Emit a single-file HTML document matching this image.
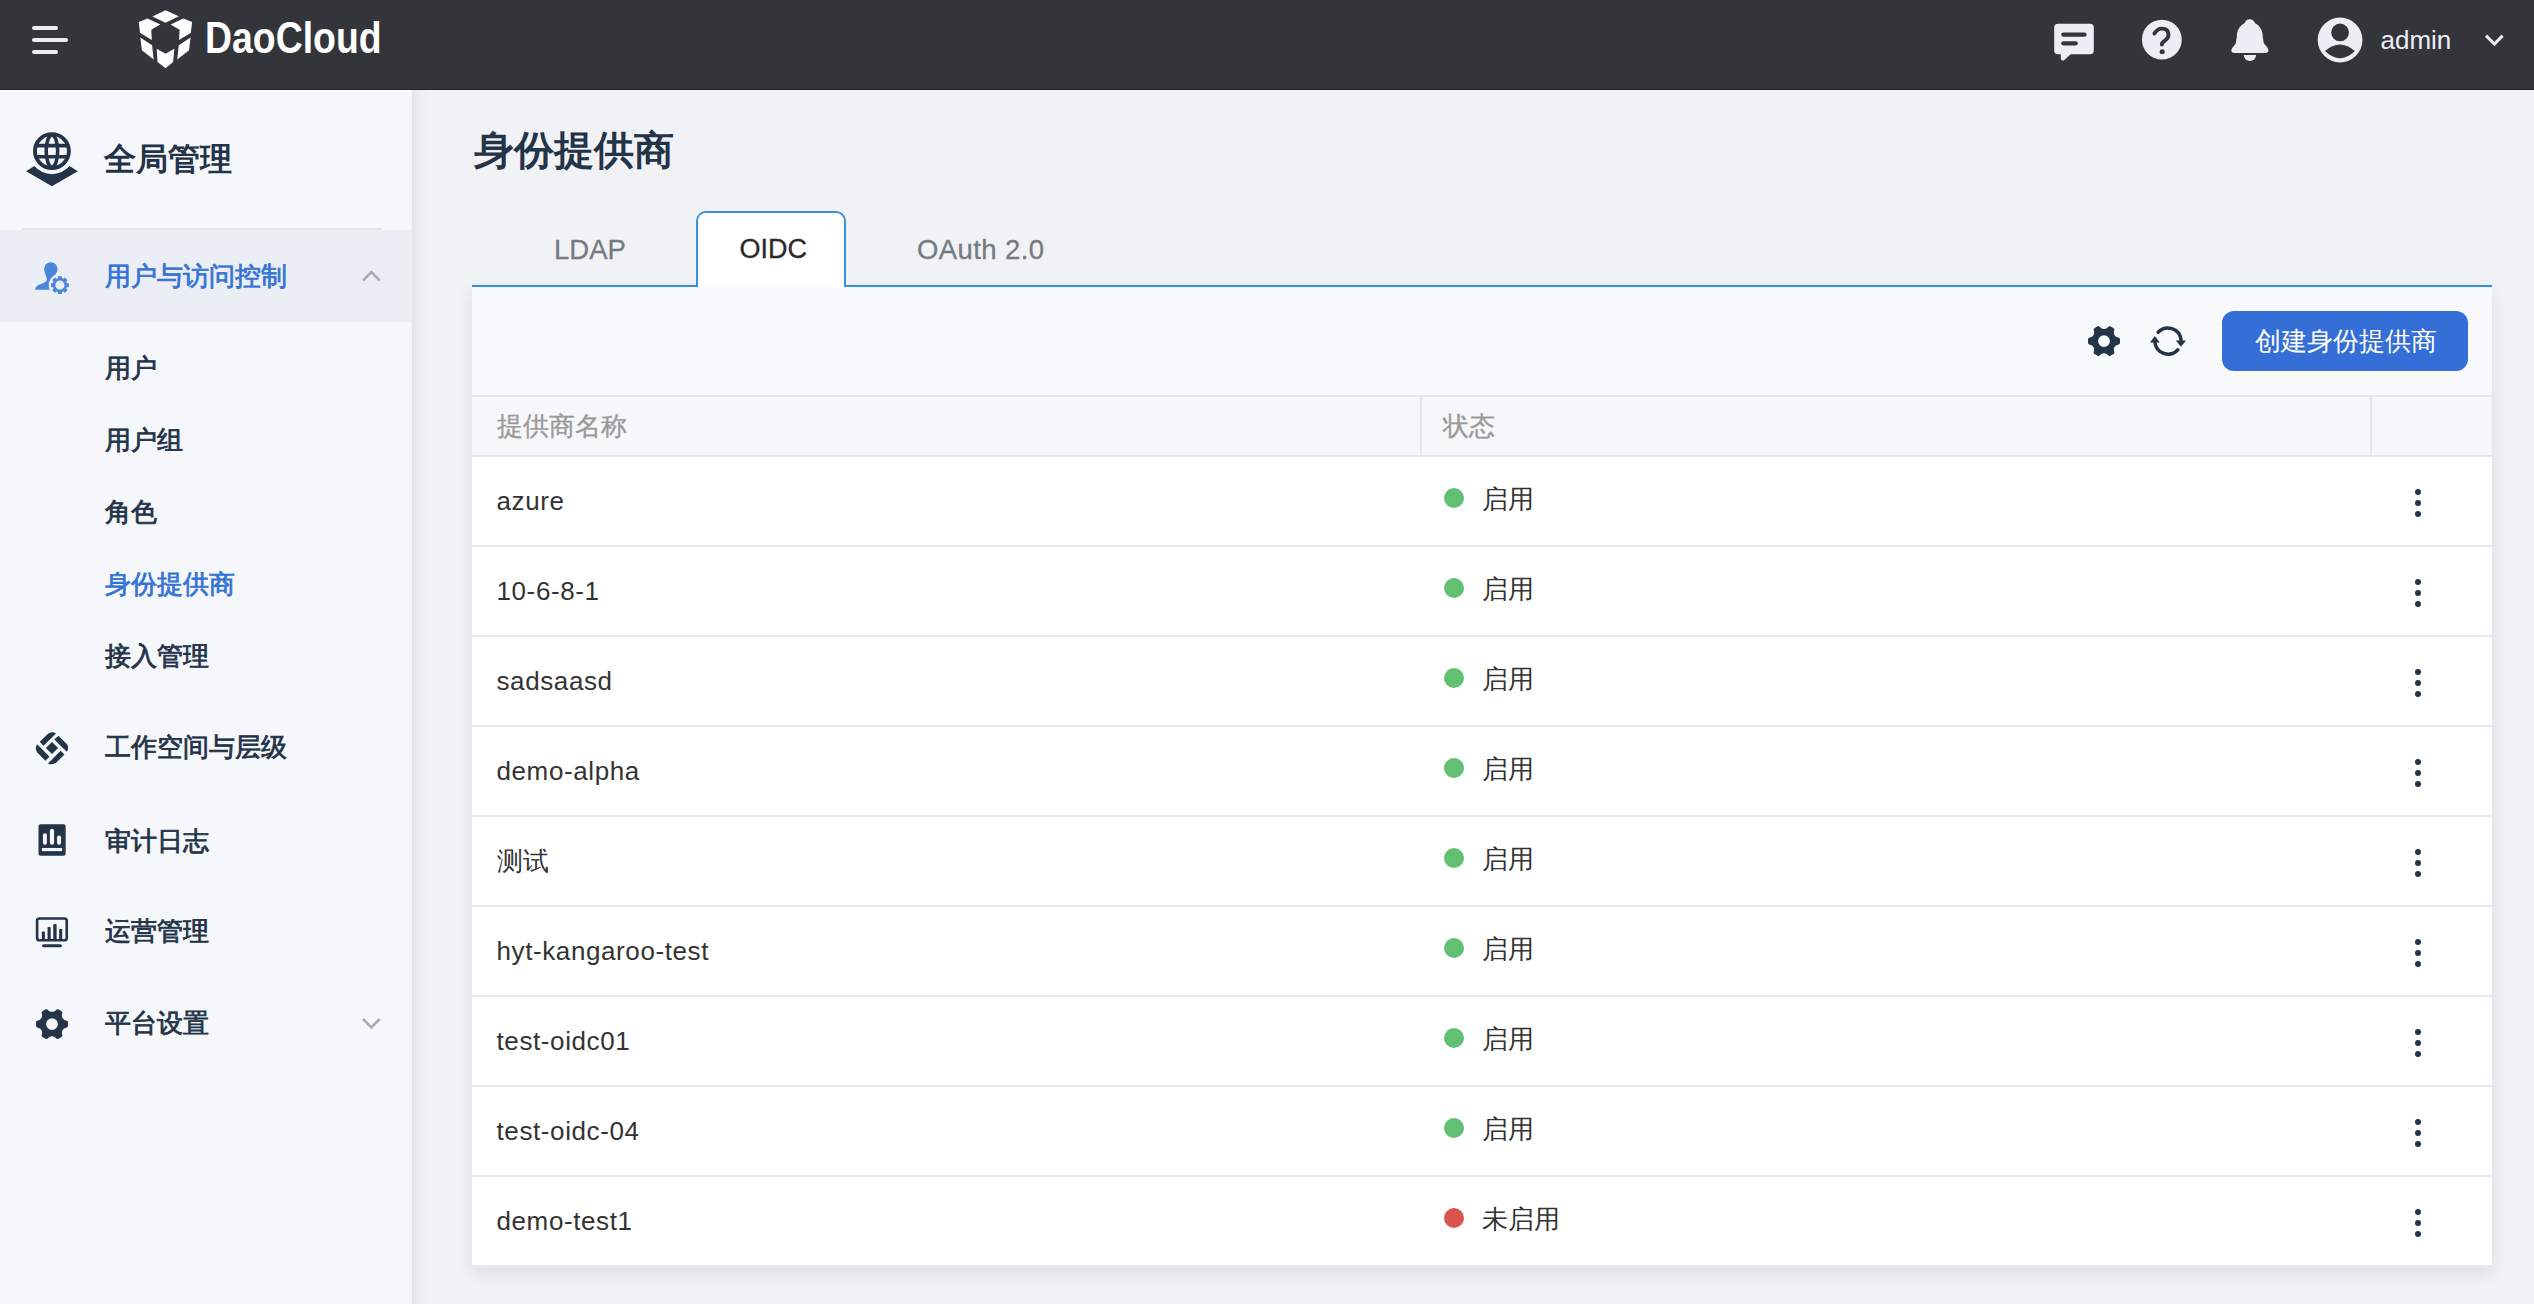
<!DOCTYPE html>
<html><head><meta charset="utf-8">
<style>
*{box-sizing:border-box;margin:0;padding:0}
html,body{width:2534px;height:1304px;overflow:hidden;background:#f1f2f6;font-family:"Liberation Sans",sans-serif}
.a{position:absolute}
.t{position:absolute;white-space:nowrap;line-height:1}
svg{position:absolute;overflow:visible}
</style></head><body>
<div class="a" style="left:0;top:0;width:2534px;height:90px;background:#34353b"></div>
<div class="a" style="left:0;top:89px;width:2534px;height:1px;background:#26272c"></div>
<div class="a" style="left:32px;top:26px;width:26px;height:4px;border-radius:2px;background:#eceef5"></div>
<div class="a" style="left:32px;top:38px;width:36px;height:4px;border-radius:2px;background:#eceef5"></div>
<div class="a" style="left:32px;top:50px;width:26px;height:4px;border-radius:2px;background:#eceef5"></div>
<svg style="left:130px;top:0" width="260" height="80" viewBox="0 0 2534 780"><g fill="#fff">
<path d="M346,100 L475,158 L346,222 L218,160 Z"/>
<path d="M85,215 L170,180 L295,240 L207,290 L212,390 L97,320 Z"/>
<path d="M605,215 L520,180 L395,240 L483,290 L478,390 L593,320 Z"/>
<path d="M100,365 L215,440 L230,580 L115,490 Z"/>
<path d="M590,365 L475,440 L460,580 L575,490 Z"/>
<path d="M260,475 L346,525 L432,475 L420,605 L346,665 L268,605 Z"/>
</g></svg>
<div class="t" style="left:205px;top:16px;font-size:44px;color:#fff;font-weight:700;transform:scaleX(0.85);transform-origin:0 0;">DaoCloud</div>
<svg style="left:2040px;top:10px" width="160" height="60" viewBox="0 0 2534 950">
<g fill="#eceef5"><rect x="225" y="218" width="627" height="482" rx="60"/>
<path d="M330,680 L330,770 Q335,815 385,790 L500,690 Z"/></g>
<g stroke="#34353b" stroke-width="68" stroke-linecap="round" fill="none"><path d="M370,390 H705"/><path d="M370,528 H565"/></g>
<circle cx="1930" cy="470" r="315" fill="#eceef5"/>
<path d="M1812,372 Q1860,295 1930,295 Q2035,295 2035,395 Q2035,440 1983,480 Q1930,515 1930,545" stroke="#34353b" stroke-width="62" stroke-linecap="round" fill="none"/>
<circle cx="1935" cy="660" r="40" fill="#34353b"/>
</svg>
<svg style="left:2210px;top:10px" width="160" height="60" viewBox="0 0 2534 950"><g fill="#eceef5">
<path d="M630,145 C670,145 700,170 715,210 C790,250 835,320 835,420 L850,520 C870,560 930,600 925,640 C925,665 905,680 880,680 L385,680 C355,680 335,665 338,635 C340,600 400,560 410,520 L425,420 C425,320 470,250 545,210 C560,170 590,145 630,145 Z"/>
<path d="M535,712 H730 A97,97 0 0 1 535,712 Z"/>
<circle cx="2060" cy="475" r="355"/></g>
<g fill="#34353b"><circle cx="2060" cy="355" r="140"/><path d="M1820,650 Q2060,440 2295,650 Q2060,880 1820,650 Z"/></g>
</svg>
<div class="t" style="left:2380.5px;top:27px;font-size:26px;color:#eceef5;font-weight:400;">admin</div>
<svg style="left:2480px;top:28px" width="30" height="22" viewBox="0 0 30 22"><path d="M6,7.6 L14.4,16 L22.6,7.6" stroke="#eceef5" stroke-width="3" fill="none"/></svg>
<div class="a" style="left:0;top:90px;width:412px;height:1214px;background:#f6f7fb"></div>
<div class="a" style="left:0;top:90px;width:412px;height:1px;background:#fbfcfe"></div>
<div class="a" style="left:412px;top:90px;width:18px;height:1214px;background:linear-gradient(to right,rgba(40,45,60,0.07),rgba(40,45,60,0.02) 50%,rgba(40,45,60,0))"></div>
<svg style="left:20px;top:120px" width="70" height="75" viewBox="0 0 1217 1304"><g stroke="#233348" fill="none">
<circle cx="555" cy="540" r="295" stroke-width="68"/>
<ellipse cx="555" cy="540" rx="100" ry="280" stroke-width="62"/>
<path d="M270,445 H840 M270,640 H840" stroke-width="62"/></g>
<path fill="#233348" d="M105,890 L250,800 A400,400 0 0 0 860,800 L1005,890 L555,1150 Z"/>
</svg>
<div class="t" style="left:104px;top:143.5px;font-size:31.5px;color:#233348;font-weight:700;">全局管理</div>
<div class="a" style="left:22px;top:228px;width:360px;height:2px;background:#e3e5eb"></div>
<div class="a" style="left:0;top:230px;width:412px;height:92px;background:#eceef6"></div>
<svg style="left:25px;top:250px" width="60" height="55" viewBox="0 0 1423 1304">
<g fill="#4a86da"><circle cx="612" cy="448" r="160"/><path d="M470,540 C490,610 520,650 520,700 C520,745 480,770 420,790 C300,830 240,880 240,945 L600,945 C560,860 570,760 640,680 L740,560 Z"/></g>
<circle cx="828" cy="833" r="265" fill="#eceef6"/>
<path fill="#4a86da" fill-rule="evenodd" d="M1041.00,833.00 L1040.99,834.86 L1040.97,836.72 L1040.93,838.58 L1040.87,840.43 L1040.80,842.29 L1040.71,844.15 L1040.60,846.00 L1040.48,847.86 L1040.34,849.71 L1040.19,851.56 L1040.02,853.42 L1039.83,855.26 L1039.63,857.11 L1039.41,858.96 L1039.18,860.80 L1038.93,862.64 L1038.66,864.48 L1038.38,866.32 L1038.08,868.16 L1037.76,869.99 L1037.43,871.82 L1037.09,873.64 L1036.72,875.47 L1036.35,877.29 L1035.95,879.10 L1033.95,880.55 L1028.99,881.25 L1021.79,881.32 L1013.40,880.95 L1005.03,880.43 L997.89,880.11 L992.99,880.31 L991.00,881.28 L990.57,882.70 L990.13,884.12 L989.68,885.53 L989.22,886.94 L988.74,888.35 L988.25,889.75 L987.75,891.14 L987.23,892.54 L986.71,893.92 L986.17,895.31 L985.62,896.68 L985.06,898.06 L984.49,899.42 L983.90,900.79 L983.30,902.15 L982.69,903.50 L982.07,904.85 L981.44,906.19 L980.79,907.52 L980.14,908.85 L979.47,910.18 L978.79,911.50 L978.10,912.81 L977.40,914.12 L978.12,916.21 L981.44,919.81 L986.72,924.64 L993.00,930.19 L999.20,935.87 L1004.24,941.00 L1007.25,945.01 L1007.64,947.44 L1006.64,949.01 L1005.62,950.56 L1004.59,952.11 L1003.54,953.64 L1002.48,955.17 L1001.41,956.69 L1000.32,958.20 L999.22,959.70 L998.11,961.19 L996.98,962.67 L995.85,964.14 L994.70,965.60 L993.53,967.05 L992.36,968.48 L991.17,969.91 L989.97,971.33 L988.75,972.74 L987.53,974.14 L986.29,975.52 L985.04,976.90 L983.78,978.27 L982.50,979.62 L981.22,980.96 L979.92,982.29 L978.61,983.61 L977.29,984.92 L975.96,986.22 L974.62,987.50 L973.27,988.78 L971.90,990.04 L970.52,991.29 L969.14,992.53 L967.74,993.75 L966.33,994.97 L964.91,996.17 L963.48,997.36 L962.05,998.53 L960.60,999.70 L959.14,1000.85 L957.67,1001.98 L956.19,1003.11 L954.70,1004.22 L953.20,1005.32 L951.69,1006.41 L950.17,1007.48 L948.64,1008.54 L947.11,1009.59 L945.56,1010.62 L944.01,1011.64 L942.44,1012.64 L940.01,1012.25 L936.00,1009.24 L930.87,1004.20 L925.19,998.00 L919.64,991.72 L914.81,986.44 L911.21,983.12 L909.12,982.40 L907.81,983.10 L906.50,983.79 L905.18,984.47 L903.85,985.14 L902.52,985.79 L901.19,986.44 L899.85,987.07 L898.50,987.69 L897.15,988.30 L895.79,988.90 L894.42,989.49 L893.06,990.06 L891.68,990.62 L890.31,991.17 L888.92,991.71 L887.54,992.23 L886.14,992.75 L884.75,993.25 L883.35,993.74 L881.94,994.22 L880.53,994.68 L879.12,995.13 L877.70,995.57 L876.28,996.00 L875.31,997.99 L875.11,1002.89 L875.43,1010.03 L875.95,1018.40 L876.32,1026.79 L876.25,1033.99 L875.55,1038.95 L874.10,1040.95 L872.29,1041.35 L870.47,1041.72 L868.64,1042.09 L866.82,1042.43 L864.99,1042.76 L863.16,1043.08 L861.32,1043.38 L859.48,1043.66 L857.64,1043.93 L855.80,1044.18 L853.96,1044.41 L852.11,1044.63 L850.26,1044.83 L848.42,1045.02 L846.56,1045.19 L844.71,1045.34 L842.86,1045.48 L841.00,1045.60 L839.15,1045.71 L837.29,1045.80 L835.43,1045.87 L833.58,1045.93 L831.72,1045.97 L829.86,1045.99 L828.00,1046.00 L826.14,1045.99 L824.28,1045.97 L822.42,1045.93 L820.57,1045.87 L818.71,1045.80 L816.85,1045.71 L815.00,1045.60 L813.14,1045.48 L811.29,1045.34 L809.44,1045.19 L807.58,1045.02 L805.74,1044.83 L803.89,1044.63 L802.04,1044.41 L800.20,1044.18 L798.36,1043.93 L796.52,1043.66 L794.68,1043.38 L792.84,1043.08 L791.01,1042.76 L789.18,1042.43 L787.36,1042.09 L785.53,1041.72 L783.71,1041.35 L781.90,1040.95 L780.45,1038.95 L779.75,1033.99 L779.68,1026.79 L780.05,1018.40 L780.57,1010.03 L780.89,1002.89 L780.69,997.99 L779.72,996.00 L778.30,995.57 L776.88,995.13 L775.47,994.68 L774.06,994.22 L772.65,993.74 L771.25,993.25 L769.86,992.75 L768.46,992.23 L767.08,991.71 L765.69,991.17 L764.32,990.62 L762.94,990.06 L761.58,989.49 L760.21,988.90 L758.85,988.30 L757.50,987.69 L756.15,987.07 L754.81,986.44 L753.48,985.79 L752.15,985.14 L750.82,984.47 L749.50,983.79 L748.19,983.10 L746.88,982.40 L744.79,983.12 L741.19,986.44 L736.36,991.72 L730.81,998.00 L725.13,1004.20 L720.00,1009.24 L715.99,1012.25 L713.56,1012.64 L711.99,1011.64 L710.44,1010.62 L708.89,1009.59 L707.36,1008.54 L705.83,1007.48 L704.31,1006.41 L702.80,1005.32 L701.30,1004.22 L699.81,1003.11 L698.33,1001.98 L696.86,1000.85 L695.40,999.70 L693.95,998.53 L692.52,997.36 L691.09,996.17 L689.67,994.97 L688.26,993.75 L686.86,992.53 L685.48,991.29 L684.10,990.04 L682.73,988.78 L681.38,987.50 L680.04,986.22 L678.71,984.92 L677.39,983.61 L676.08,982.29 L674.78,980.96 L673.50,979.62 L672.22,978.27 L670.96,976.90 L669.71,975.52 L668.47,974.14 L667.25,972.74 L666.03,971.33 L664.83,969.91 L663.64,968.48 L662.47,967.05 L661.30,965.60 L660.15,964.14 L659.02,962.67 L657.89,961.19 L656.78,959.70 L655.68,958.20 L654.59,956.69 L653.52,955.17 L652.46,953.64 L651.41,952.11 L650.38,950.56 L649.36,949.01 L648.36,947.44 L648.75,945.01 L651.76,941.00 L656.80,935.87 L663.00,930.19 L669.28,924.64 L674.56,919.81 L677.88,916.21 L678.60,914.12 L677.90,912.81 L677.21,911.50 L676.53,910.18 L675.86,908.85 L675.21,907.52 L674.56,906.19 L673.93,904.85 L673.31,903.50 L672.70,902.15 L672.10,900.79 L671.51,899.42 L670.94,898.06 L670.38,896.68 L669.83,895.31 L669.29,893.92 L668.77,892.54 L668.25,891.14 L667.75,889.75 L667.26,888.35 L666.78,886.94 L666.32,885.53 L665.87,884.12 L665.43,882.70 L665.00,881.28 L663.01,880.31 L658.11,880.11 L650.97,880.43 L642.60,880.95 L634.21,881.32 L627.01,881.25 L622.05,880.55 L620.05,879.10 L619.65,877.29 L619.28,875.47 L618.91,873.64 L618.57,871.82 L618.24,869.99 L617.92,868.16 L617.62,866.32 L617.34,864.48 L617.07,862.64 L616.82,860.80 L616.59,858.96 L616.37,857.11 L616.17,855.26 L615.98,853.42 L615.81,851.56 L615.66,849.71 L615.52,847.86 L615.40,846.00 L615.29,844.15 L615.20,842.29 L615.13,840.43 L615.07,838.58 L615.03,836.72 L615.01,834.86 L615.00,833.00 L615.01,831.14 L615.03,829.28 L615.07,827.42 L615.13,825.57 L615.20,823.71 L615.29,821.85 L615.40,820.00 L615.52,818.14 L615.66,816.29 L615.81,814.44 L615.98,812.58 L616.17,810.74 L616.37,808.89 L616.59,807.04 L616.82,805.20 L617.07,803.36 L617.34,801.52 L617.62,799.68 L617.92,797.84 L618.24,796.01 L618.57,794.18 L618.91,792.36 L619.28,790.53 L619.65,788.71 L620.05,786.90 L622.05,785.45 L627.01,784.75 L634.21,784.68 L642.60,785.05 L650.97,785.57 L658.11,785.89 L663.01,785.69 L665.00,784.72 L665.43,783.30 L665.87,781.88 L666.32,780.47 L666.78,779.06 L667.26,777.65 L667.75,776.25 L668.25,774.86 L668.77,773.46 L669.29,772.08 L669.83,770.69 L670.38,769.32 L670.94,767.94 L671.51,766.58 L672.10,765.21 L672.70,763.85 L673.31,762.50 L673.93,761.15 L674.56,759.81 L675.21,758.48 L675.86,757.15 L676.53,755.82 L677.21,754.50 L677.90,753.19 L678.60,751.88 L677.88,749.79 L674.56,746.19 L669.28,741.36 L663.00,735.81 L656.80,730.13 L651.76,725.00 L648.75,720.99 L648.36,718.56 L649.36,716.99 L650.38,715.44 L651.41,713.89 L652.46,712.36 L653.52,710.83 L654.59,709.31 L655.68,707.80 L656.78,706.30 L657.89,704.81 L659.02,703.33 L660.15,701.86 L661.30,700.40 L662.47,698.95 L663.64,697.52 L664.83,696.09 L666.03,694.67 L667.25,693.26 L668.47,691.86 L669.71,690.48 L670.96,689.10 L672.22,687.73 L673.50,686.38 L674.78,685.04 L676.08,683.71 L677.39,682.39 L678.71,681.08 L680.04,679.78 L681.38,678.50 L682.73,677.22 L684.10,675.96 L685.48,674.71 L686.86,673.47 L688.26,672.25 L689.67,671.03 L691.09,669.83 L692.52,668.64 L693.95,667.47 L695.40,666.30 L696.86,665.15 L698.33,664.02 L699.81,662.89 L701.30,661.78 L702.80,660.68 L704.31,659.59 L705.83,658.52 L707.36,657.46 L708.89,656.41 L710.44,655.38 L711.99,654.36 L713.56,653.36 L715.99,653.75 L720.00,656.76 L725.13,661.80 L730.81,668.00 L736.36,674.28 L741.19,679.56 L744.79,682.88 L746.88,683.60 L748.19,682.90 L749.50,682.21 L750.82,681.53 L752.15,680.86 L753.48,680.21 L754.81,679.56 L756.15,678.93 L757.50,678.31 L758.85,677.70 L760.21,677.10 L761.58,676.51 L762.94,675.94 L764.32,675.38 L765.69,674.83 L767.08,674.29 L768.46,673.77 L769.86,673.25 L771.25,672.75 L772.65,672.26 L774.06,671.78 L775.47,671.32 L776.88,670.87 L778.30,670.43 L779.72,670.00 L780.69,668.01 L780.89,663.11 L780.57,655.97 L780.05,647.60 L779.68,639.21 L779.75,632.01 L780.45,627.05 L781.90,625.05 L783.71,624.65 L785.53,624.28 L787.36,623.91 L789.18,623.57 L791.01,623.24 L792.84,622.92 L794.68,622.62 L796.52,622.34 L798.36,622.07 L800.20,621.82 L802.04,621.59 L803.89,621.37 L805.74,621.17 L807.58,620.98 L809.44,620.81 L811.29,620.66 L813.14,620.52 L815.00,620.40 L816.85,620.29 L818.71,620.20 L820.57,620.13 L822.42,620.07 L824.28,620.03 L826.14,620.01 L828.00,620.00 L829.86,620.01 L831.72,620.03 L833.58,620.07 L835.43,620.13 L837.29,620.20 L839.15,620.29 L841.00,620.40 L842.86,620.52 L844.71,620.66 L846.56,620.81 L848.42,620.98 L850.26,621.17 L852.11,621.37 L853.96,621.59 L855.80,621.82 L857.64,622.07 L859.48,622.34 L861.32,622.62 L863.16,622.92 L864.99,623.24 L866.82,623.57 L868.64,623.91 L870.47,624.28 L872.29,624.65 L874.10,625.05 L875.55,627.05 L876.25,632.01 L876.32,639.21 L875.95,647.60 L875.43,655.97 L875.11,663.11 L875.31,668.01 L876.28,670.00 L877.70,670.43 L879.12,670.87 L880.53,671.32 L881.94,671.78 L883.35,672.26 L884.75,672.75 L886.14,673.25 L887.54,673.77 L888.92,674.29 L890.31,674.83 L891.68,675.38 L893.06,675.94 L894.42,676.51 L895.79,677.10 L897.15,677.70 L898.50,678.31 L899.85,678.93 L901.19,679.56 L902.52,680.21 L903.85,680.86 L905.18,681.53 L906.50,682.21 L907.81,682.90 L909.12,683.60 L911.21,682.88 L914.81,679.56 L919.64,674.28 L925.19,668.00 L930.87,661.80 L936.00,656.76 L940.01,653.75 L942.44,653.36 L944.01,654.36 L945.56,655.38 L947.11,656.41 L948.64,657.46 L950.17,658.52 L951.69,659.59 L953.20,660.68 L954.70,661.78 L956.19,662.89 L957.67,664.02 L959.14,665.15 L960.60,666.30 L962.05,667.47 L963.48,668.64 L964.91,669.83 L966.33,671.03 L967.74,672.25 L969.14,673.47 L970.52,674.71 L971.90,675.96 L973.27,677.22 L974.62,678.50 L975.96,679.78 L977.29,681.08 L978.61,682.39 L979.92,683.71 L981.22,685.04 L982.50,686.38 L983.78,687.73 L985.04,689.10 L986.29,690.48 L987.53,691.86 L988.75,693.26 L989.97,694.67 L991.17,696.09 L992.36,697.52 L993.53,698.95 L994.70,700.40 L995.85,701.86 L996.98,703.33 L998.11,704.81 L999.22,706.30 L1000.32,707.80 L1001.41,709.31 L1002.48,710.83 L1003.54,712.36 L1004.59,713.89 L1005.62,715.44 L1006.64,716.99 L1007.64,718.56 L1007.25,720.99 L1004.24,725.00 L999.20,730.13 L993.00,735.81 L986.72,741.36 L981.44,746.19 L978.12,749.79 L977.40,751.88 L978.10,753.19 L978.79,754.50 L979.47,755.82 L980.14,757.15 L980.79,758.48 L981.44,759.81 L982.07,761.15 L982.69,762.50 L983.30,763.85 L983.90,765.21 L984.49,766.58 L985.06,767.94 L985.62,769.32 L986.17,770.69 L986.71,772.08 L987.23,773.46 L987.75,774.86 L988.25,776.25 L988.74,777.65 L989.22,779.06 L989.68,780.47 L990.13,781.88 L990.57,783.30 L991.00,784.72 L992.99,785.69 L997.89,785.89 L1005.03,785.57 L1013.40,785.05 L1021.79,784.68 L1028.99,784.75 L1033.95,785.45 L1035.95,786.90 L1036.35,788.71 L1036.72,790.53 L1037.09,792.36 L1037.43,794.18 L1037.76,796.01 L1038.08,797.84 L1038.38,799.68 L1038.66,801.52 L1038.93,803.36 L1039.18,805.20 L1039.41,807.04 L1039.63,808.89 L1039.83,810.74 L1040.02,812.58 L1040.19,814.44 L1040.34,816.29 L1040.48,818.14 L1040.60,820.00 L1040.71,821.85 L1040.80,823.71 L1040.87,825.57 L1040.93,827.42 L1040.97,829.28 L1040.99,831.14 Z M720.00,833.00 a108.00,108.00 0 1,0 216.00,0 a108.00,108.00 0 1,0 -216.00,0 Z"/>
</svg>
<div class="t" style="left:104.5px;top:262.5px;font-size:26px;color:#3574d4;font-weight:400;-webkit-text-stroke:0.8px #3574d4;">用户与访问控制</div>
<svg style="left:355px;top:262px" width="32" height="26" viewBox="0 0 32 26"><path d="M8,18.5 L16.4,10 L24.7,18.5" stroke="#a9acb3" stroke-width="2.6" fill="none"/></svg>
<div class="t" style="left:104.5px;top:354.5px;font-size:26px;color:#233348;font-weight:400;-webkit-text-stroke:0.8px #233348;">用户</div>
<div class="t" style="left:104.5px;top:426.5px;font-size:26px;color:#233348;font-weight:400;-webkit-text-stroke:0.8px #233348;">用户组</div>
<div class="t" style="left:104.5px;top:498.5px;font-size:26px;color:#233348;font-weight:400;-webkit-text-stroke:0.8px #233348;">角色</div>
<div class="t" style="left:104.5px;top:570.5px;font-size:26px;color:#3574d4;font-weight:400;-webkit-text-stroke:0.8px #3574d4;">身份提供商</div>
<div class="t" style="left:104.5px;top:642.5px;font-size:26px;color:#233348;font-weight:400;-webkit-text-stroke:0.8px #233348;">接入管理</div>
<div class="t" style="left:104.5px;top:734px;font-size:26px;color:#233348;font-weight:400;-webkit-text-stroke:0.8px #233348;">工作空间与层级</div>
<div class="t" style="left:104.5px;top:827.5px;font-size:26px;color:#233348;font-weight:400;-webkit-text-stroke:0.8px #233348;">审计日志</div>
<div class="t" style="left:104.5px;top:918px;font-size:26px;color:#233348;font-weight:400;-webkit-text-stroke:0.8px #233348;">运营管理</div>
<div class="t" style="left:104.5px;top:1010px;font-size:26px;color:#233348;font-weight:400;-webkit-text-stroke:0.8px #233348;">平台设置</div>
<svg style="left:25px;top:720px" width="60" height="55" viewBox="0 0 1423 1304"><g fill="#233348">
<path d="M350,515 L545,325 Q640,255 735,320 L440,610 Z"/>
<path d="M695,460 L795,375 L985,565 Q1060,650 990,755 Z"/>
<path d="M545,1030 L845,730 L935,820 L745,1010 Q640,1080 545,1030 Z"/>
<path d="M290,575 L580,870 L485,965 L290,770 Q220,670 290,575 Z"/>
<path d="M640,520 L785,665 L640,805 L495,665 Z"/></g>
</svg>
<svg style="left:25px;top:810px" width="60" height="55" viewBox="0 0 1423 1304">
<rect x="320" y="335" width="645" height="750" rx="55" fill="#233348"/>
<g fill="#f6f7fb"><rect x="425" y="550" width="95" height="275" rx="47"/><rect x="590" y="445" width="100" height="380" rx="50"/>
<rect x="760" y="605" width="95" height="220" rx="47"/><rect x="400" y="900" width="480" height="75"/></g>
</svg>
<svg style="left:25px;top:900px" width="60" height="55" viewBox="0 0 1423 1304">
<rect x="287" y="437" width="703" height="517" rx="55" stroke="#233348" stroke-width="62" fill="none"/>
<g fill="#233348"><rect x="400" y="745" width="72" height="200" rx="20"/><rect x="535" y="640" width="75" height="305" rx="20"/>
<rect x="670" y="570" width="80" height="375" rx="20"/><rect x="810" y="685" width="72" height="260" rx="20"/></g>
<path d="M440,1085 H840" stroke="#233348" stroke-width="72" stroke-linecap="round"/>
</svg>
<svg style="left:0;top:0" width="2534" height="1304" viewBox="0 0 2534 1304"><path fill="#233348" fill-rule="evenodd" d="M68.00,1024.10 L68.00,1024.38 L67.99,1024.66 L67.98,1024.94 L67.96,1025.22 L67.94,1025.49 L67.91,1025.77 L67.88,1026.05 L67.84,1026.33 L67.80,1026.60 L67.69,1026.87 L67.43,1027.10 L67.09,1027.31 L66.70,1027.49 L66.27,1027.66 L65.80,1027.80 L65.31,1027.92 L64.94,1028.06 L64.64,1028.21 L64.38,1028.36 L64.14,1028.52 L63.93,1028.68 L63.73,1028.84 L63.55,1029.00 L63.38,1029.17 L63.22,1029.33 L63.08,1029.50 L62.94,1029.67 L62.81,1029.85 L62.69,1030.03 L62.58,1030.21 L62.48,1030.40 L62.39,1030.59 L62.30,1030.79 L62.22,1030.99 L62.14,1031.20 L62.08,1031.42 L62.02,1031.65 L61.97,1031.89 L61.93,1032.14 L61.90,1032.41 L61.88,1032.69 L61.88,1033.00 L61.90,1033.33 L61.96,1033.72 L62.10,1034.20 L62.22,1034.68 L62.29,1035.14 L62.32,1035.57 L62.31,1035.96 L62.24,1036.30 L62.07,1036.53 L61.85,1036.71 L61.63,1036.88 L61.40,1037.04 L61.18,1037.21 L60.95,1037.36 L60.71,1037.52 L60.48,1037.67 L60.24,1037.81 L60.00,1037.96 L59.76,1038.09 L59.51,1038.23 L59.26,1038.36 L59.01,1038.48 L58.76,1038.60 L58.51,1038.72 L58.25,1038.83 L57.99,1038.93 L57.73,1039.04 L57.45,1039.07 L57.12,1038.96 L56.77,1038.77 L56.41,1038.53 L56.05,1038.24 L55.70,1037.90 L55.35,1037.53 L55.04,1037.29 L54.76,1037.10 L54.50,1036.95 L54.24,1036.83 L54.00,1036.72 L53.76,1036.63 L53.53,1036.55 L53.30,1036.49 L53.08,1036.44 L52.86,1036.39 L52.64,1036.36 L52.43,1036.34 L52.21,1036.33 L52.00,1036.32 L51.79,1036.33 L51.57,1036.34 L51.36,1036.36 L51.14,1036.39 L50.92,1036.44 L50.70,1036.49 L50.47,1036.55 L50.24,1036.63 L50.00,1036.72 L49.76,1036.83 L49.50,1036.95 L49.24,1037.10 L48.96,1037.29 L48.65,1037.53 L48.30,1037.90 L47.95,1038.24 L47.59,1038.53 L47.23,1038.77 L46.88,1038.96 L46.55,1039.07 L46.27,1039.04 L46.01,1038.93 L45.75,1038.83 L45.49,1038.72 L45.24,1038.60 L44.99,1038.48 L44.74,1038.36 L44.49,1038.23 L44.24,1038.09 L44.00,1037.96 L43.76,1037.81 L43.52,1037.67 L43.29,1037.52 L43.05,1037.36 L42.82,1037.21 L42.60,1037.04 L42.37,1036.88 L42.15,1036.71 L41.93,1036.53 L41.76,1036.30 L41.69,1035.96 L41.68,1035.57 L41.71,1035.14 L41.78,1034.68 L41.90,1034.20 L42.04,1033.72 L42.10,1033.33 L42.12,1033.00 L42.12,1032.69 L42.10,1032.41 L42.07,1032.14 L42.03,1031.89 L41.98,1031.65 L41.92,1031.42 L41.86,1031.20 L41.78,1030.99 L41.70,1030.79 L41.61,1030.59 L41.52,1030.40 L41.42,1030.21 L41.31,1030.03 L41.19,1029.85 L41.06,1029.67 L40.92,1029.50 L40.78,1029.33 L40.62,1029.17 L40.45,1029.00 L40.27,1028.84 L40.07,1028.68 L39.86,1028.52 L39.62,1028.36 L39.36,1028.21 L39.06,1028.06 L38.69,1027.92 L38.20,1027.80 L37.73,1027.66 L37.30,1027.49 L36.91,1027.31 L36.57,1027.10 L36.31,1026.87 L36.20,1026.60 L36.16,1026.33 L36.12,1026.05 L36.09,1025.77 L36.06,1025.49 L36.04,1025.22 L36.02,1024.94 L36.01,1024.66 L36.00,1024.38 L36.00,1024.10 L36.00,1023.82 L36.01,1023.54 L36.02,1023.26 L36.04,1022.98 L36.06,1022.71 L36.09,1022.43 L36.12,1022.15 L36.16,1021.87 L36.20,1021.60 L36.31,1021.33 L36.57,1021.10 L36.91,1020.89 L37.30,1020.71 L37.73,1020.54 L38.20,1020.40 L38.69,1020.28 L39.06,1020.14 L39.36,1019.99 L39.62,1019.84 L39.86,1019.68 L40.07,1019.52 L40.27,1019.36 L40.45,1019.20 L40.62,1019.03 L40.78,1018.87 L40.92,1018.70 L41.06,1018.53 L41.19,1018.35 L41.31,1018.17 L41.42,1017.99 L41.52,1017.80 L41.61,1017.61 L41.70,1017.41 L41.78,1017.21 L41.86,1017.00 L41.92,1016.78 L41.98,1016.55 L42.03,1016.31 L42.07,1016.06 L42.10,1015.79 L42.12,1015.51 L42.12,1015.20 L42.10,1014.87 L42.04,1014.48 L41.90,1014.00 L41.78,1013.52 L41.71,1013.06 L41.68,1012.63 L41.69,1012.24 L41.76,1011.90 L41.93,1011.67 L42.15,1011.49 L42.37,1011.32 L42.60,1011.16 L42.82,1010.99 L43.05,1010.84 L43.29,1010.68 L43.52,1010.53 L43.76,1010.39 L44.00,1010.24 L44.24,1010.11 L44.49,1009.97 L44.74,1009.84 L44.99,1009.72 L45.24,1009.60 L45.49,1009.48 L45.75,1009.37 L46.01,1009.27 L46.27,1009.16 L46.55,1009.13 L46.88,1009.24 L47.23,1009.43 L47.59,1009.67 L47.95,1009.96 L48.30,1010.30 L48.65,1010.67 L48.96,1010.91 L49.24,1011.10 L49.50,1011.25 L49.76,1011.37 L50.00,1011.48 L50.24,1011.57 L50.47,1011.65 L50.70,1011.71 L50.92,1011.76 L51.14,1011.81 L51.36,1011.84 L51.57,1011.86 L51.79,1011.87 L52.00,1011.88 L52.21,1011.87 L52.43,1011.86 L52.64,1011.84 L52.86,1011.81 L53.08,1011.76 L53.30,1011.71 L53.53,1011.65 L53.76,1011.57 L54.00,1011.48 L54.24,1011.37 L54.50,1011.25 L54.76,1011.10 L55.04,1010.91 L55.35,1010.67 L55.70,1010.30 L56.05,1009.96 L56.41,1009.67 L56.77,1009.43 L57.12,1009.24 L57.45,1009.13 L57.73,1009.16 L57.99,1009.27 L58.25,1009.37 L58.51,1009.48 L58.76,1009.60 L59.01,1009.72 L59.26,1009.84 L59.51,1009.97 L59.76,1010.11 L60.00,1010.24 L60.24,1010.39 L60.48,1010.53 L60.71,1010.68 L60.95,1010.84 L61.18,1010.99 L61.40,1011.16 L61.63,1011.32 L61.85,1011.49 L62.07,1011.67 L62.24,1011.90 L62.31,1012.24 L62.32,1012.63 L62.29,1013.06 L62.22,1013.52 L62.10,1014.00 L61.96,1014.48 L61.90,1014.87 L61.88,1015.20 L61.88,1015.51 L61.90,1015.79 L61.93,1016.06 L61.97,1016.31 L62.02,1016.55 L62.08,1016.78 L62.14,1017.00 L62.22,1017.21 L62.30,1017.41 L62.39,1017.61 L62.48,1017.80 L62.58,1017.99 L62.69,1018.17 L62.81,1018.35 L62.94,1018.53 L63.08,1018.70 L63.22,1018.87 L63.38,1019.03 L63.55,1019.20 L63.73,1019.36 L63.93,1019.52 L64.14,1019.68 L64.38,1019.84 L64.64,1019.99 L64.94,1020.14 L65.31,1020.28 L65.80,1020.40 L66.27,1020.54 L66.70,1020.71 L67.09,1020.89 L67.43,1021.10 L67.69,1021.33 L67.80,1021.60 L67.84,1021.87 L67.88,1022.15 L67.91,1022.43 L67.94,1022.71 L67.96,1022.98 L67.98,1023.26 L67.99,1023.54 L68.00,1023.82 Z M46.10,1024.10 a5.90,5.90 0 1,0 11.80,0 a5.90,5.90 0 1,0 -11.80,0 Z"/></svg>
<svg style="left:355px;top:1010px" width="32" height="26" viewBox="0 0 32 26"><path d="M8,9 L16.4,17.5 L24.7,9" stroke="#a9acb3" stroke-width="2.6" fill="none"/></svg>
<div class="t" style="left:474px;top:130.5px;font-size:39.5px;color:#233348;font-weight:700;">身份提供商</div>
<div class="a" style="left:472px;top:285px;width:2020px;height:2px;background:#3a8fe0"></div>
<div class="a" style="left:472px;top:287px;width:2020px;height:980px;background:#fff;box-shadow:0 6px 16px rgba(30,35,50,0.10)"></div>
<div class="a" style="left:698px;top:285px;width:146px;height:2px;background:#fff"></div>
<div class="a" style="left:696px;top:211px;width:150px;height:77px;background:#fff;border:2px solid #3a8fe0;border-bottom:none;border-radius:10px 10px 0 0"></div>
<div class="t" style="left:554px;top:235.5px;font-size:27.5px;color:#767a82;font-weight:400;-webkit-text-stroke:0.3px #767a82;">LDAP</div>
<div class="t" style="left:739.5px;top:235.5px;font-size:27px;color:#2a2a2a;font-weight:400;-webkit-text-stroke:0.3px #2a2a2a;">OIDC</div>
<div class="t" style="left:917px;top:235.5px;font-size:27.5px;color:#767a82;font-weight:400;letter-spacing:0.4px;-webkit-text-stroke:0.3px #767a82;">OAuth 2.0</div>
<div class="a" style="left:472px;top:287px;width:2020px;height:108px;background:#f8f9fb"></div>
<div class="a" style="left:472px;top:395px;width:2020px;height:62px;background:#f6f7f9;border-top:2px solid #e4e6ec;border-bottom:2px solid #e4e6ec"></div>
<div class="a" style="left:1420px;top:397px;width:2px;height:58px;background:#e4e6ec"></div>
<div class="a" style="left:2370px;top:397px;width:2px;height:58px;background:#e4e6ec"></div>
<svg style="left:0;top:0" width="2534" height="1304" viewBox="0 0 2534 1304"><path fill="#233348" fill-rule="evenodd" d="M2120.00,341.10 L2120.00,341.38 L2119.99,341.66 L2119.98,341.94 L2119.96,342.22 L2119.94,342.49 L2119.91,342.77 L2119.88,343.05 L2119.84,343.33 L2119.80,343.60 L2119.69,343.87 L2119.42,344.10 L2119.08,344.30 L2118.68,344.49 L2118.24,344.65 L2117.76,344.79 L2117.25,344.90 L2116.88,345.04 L2116.58,345.19 L2116.31,345.34 L2116.07,345.49 L2115.85,345.65 L2115.65,345.81 L2115.46,345.97 L2115.29,346.13 L2115.14,346.29 L2114.99,346.46 L2114.85,346.63 L2114.73,346.80 L2114.61,346.98 L2114.50,347.16 L2114.40,347.35 L2114.30,347.54 L2114.22,347.73 L2114.14,347.94 L2114.07,348.15 L2114.00,348.37 L2113.95,348.60 L2113.90,348.83 L2113.86,349.09 L2113.84,349.35 L2113.82,349.64 L2113.83,349.95 L2113.85,350.29 L2113.92,350.68 L2114.07,351.17 L2114.19,351.66 L2114.27,352.12 L2114.31,352.55 L2114.30,352.95 L2114.24,353.30 L2114.07,353.53 L2113.85,353.71 L2113.63,353.88 L2113.40,354.04 L2113.18,354.21 L2112.95,354.36 L2112.71,354.52 L2112.48,354.67 L2112.24,354.81 L2112.00,354.96 L2111.76,355.09 L2111.51,355.23 L2111.26,355.36 L2111.01,355.48 L2110.76,355.60 L2110.51,355.72 L2110.25,355.83 L2109.99,355.93 L2109.73,356.04 L2109.45,356.07 L2109.11,355.95 L2108.76,355.76 L2108.40,355.51 L2108.04,355.21 L2107.69,354.86 L2107.34,354.48 L2107.03,354.23 L2106.75,354.03 L2106.48,353.88 L2106.23,353.75 L2105.99,353.64 L2105.75,353.54 L2105.52,353.46 L2105.29,353.40 L2105.07,353.34 L2104.85,353.30 L2104.64,353.26 L2104.42,353.24 L2104.21,353.23 L2104.00,353.22 L2103.79,353.23 L2103.58,353.24 L2103.36,353.26 L2103.15,353.30 L2102.93,353.34 L2102.71,353.40 L2102.48,353.46 L2102.25,353.54 L2102.01,353.64 L2101.77,353.75 L2101.52,353.88 L2101.25,354.03 L2100.97,354.23 L2100.66,354.48 L2100.31,354.86 L2099.96,355.21 L2099.60,355.51 L2099.24,355.76 L2098.89,355.95 L2098.55,356.07 L2098.27,356.04 L2098.01,355.93 L2097.75,355.83 L2097.49,355.72 L2097.24,355.60 L2096.99,355.48 L2096.74,355.36 L2096.49,355.23 L2096.24,355.09 L2096.00,354.96 L2095.76,354.81 L2095.52,354.67 L2095.29,354.52 L2095.05,354.36 L2094.82,354.21 L2094.60,354.04 L2094.37,353.88 L2094.15,353.71 L2093.93,353.53 L2093.76,353.30 L2093.70,352.95 L2093.69,352.55 L2093.73,352.12 L2093.81,351.66 L2093.93,351.17 L2094.08,350.68 L2094.15,350.29 L2094.17,349.95 L2094.18,349.64 L2094.16,349.35 L2094.14,349.09 L2094.10,348.83 L2094.05,348.60 L2094.00,348.37 L2093.93,348.15 L2093.86,347.94 L2093.78,347.73 L2093.70,347.54 L2093.60,347.35 L2093.50,347.16 L2093.39,346.98 L2093.27,346.80 L2093.15,346.63 L2093.01,346.46 L2092.86,346.29 L2092.71,346.13 L2092.54,345.97 L2092.35,345.81 L2092.15,345.65 L2091.93,345.49 L2091.69,345.34 L2091.42,345.19 L2091.12,345.04 L2090.75,344.90 L2090.24,344.79 L2089.76,344.65 L2089.32,344.49 L2088.92,344.30 L2088.58,344.10 L2088.31,343.87 L2088.20,343.60 L2088.16,343.33 L2088.12,343.05 L2088.09,342.77 L2088.06,342.49 L2088.04,342.22 L2088.02,341.94 L2088.01,341.66 L2088.00,341.38 L2088.00,341.10 L2088.00,340.82 L2088.01,340.54 L2088.02,340.26 L2088.04,339.98 L2088.06,339.71 L2088.09,339.43 L2088.12,339.15 L2088.16,338.87 L2088.20,338.60 L2088.31,338.33 L2088.58,338.10 L2088.92,337.90 L2089.32,337.71 L2089.76,337.55 L2090.24,337.41 L2090.75,337.30 L2091.12,337.16 L2091.42,337.01 L2091.69,336.86 L2091.93,336.71 L2092.15,336.55 L2092.35,336.39 L2092.54,336.23 L2092.71,336.07 L2092.86,335.91 L2093.01,335.74 L2093.15,335.57 L2093.27,335.40 L2093.39,335.22 L2093.50,335.04 L2093.60,334.85 L2093.70,334.66 L2093.78,334.47 L2093.86,334.26 L2093.93,334.05 L2094.00,333.83 L2094.05,333.60 L2094.10,333.37 L2094.14,333.11 L2094.16,332.85 L2094.18,332.56 L2094.17,332.25 L2094.15,331.91 L2094.08,331.52 L2093.93,331.03 L2093.81,330.54 L2093.73,330.08 L2093.69,329.65 L2093.70,329.25 L2093.76,328.90 L2093.93,328.67 L2094.15,328.49 L2094.37,328.32 L2094.60,328.16 L2094.82,327.99 L2095.05,327.84 L2095.29,327.68 L2095.52,327.53 L2095.76,327.39 L2096.00,327.24 L2096.24,327.11 L2096.49,326.97 L2096.74,326.84 L2096.99,326.72 L2097.24,326.60 L2097.49,326.48 L2097.75,326.37 L2098.01,326.27 L2098.27,326.16 L2098.55,326.13 L2098.89,326.25 L2099.24,326.44 L2099.60,326.69 L2099.96,326.99 L2100.31,327.34 L2100.66,327.72 L2100.97,327.97 L2101.25,328.17 L2101.52,328.32 L2101.77,328.45 L2102.01,328.56 L2102.25,328.66 L2102.48,328.74 L2102.71,328.80 L2102.93,328.86 L2103.15,328.90 L2103.36,328.94 L2103.58,328.96 L2103.79,328.97 L2104.00,328.98 L2104.21,328.97 L2104.42,328.96 L2104.64,328.94 L2104.85,328.90 L2105.07,328.86 L2105.29,328.80 L2105.52,328.74 L2105.75,328.66 L2105.99,328.56 L2106.23,328.45 L2106.48,328.32 L2106.75,328.17 L2107.03,327.97 L2107.34,327.72 L2107.69,327.34 L2108.04,326.99 L2108.40,326.69 L2108.76,326.44 L2109.11,326.25 L2109.45,326.13 L2109.73,326.16 L2109.99,326.27 L2110.25,326.37 L2110.51,326.48 L2110.76,326.60 L2111.01,326.72 L2111.26,326.84 L2111.51,326.97 L2111.76,327.11 L2112.00,327.24 L2112.24,327.39 L2112.48,327.53 L2112.71,327.68 L2112.95,327.84 L2113.18,327.99 L2113.40,328.16 L2113.63,328.32 L2113.85,328.49 L2114.07,328.67 L2114.24,328.90 L2114.30,329.25 L2114.31,329.65 L2114.27,330.08 L2114.19,330.54 L2114.07,331.03 L2113.92,331.52 L2113.85,331.91 L2113.83,332.25 L2113.82,332.56 L2113.84,332.85 L2113.86,333.11 L2113.90,333.37 L2113.95,333.60 L2114.00,333.83 L2114.07,334.05 L2114.14,334.26 L2114.22,334.47 L2114.30,334.66 L2114.40,334.85 L2114.50,335.04 L2114.61,335.22 L2114.73,335.40 L2114.85,335.57 L2114.99,335.74 L2115.14,335.91 L2115.29,336.07 L2115.46,336.23 L2115.65,336.39 L2115.85,336.55 L2116.07,336.71 L2116.31,336.86 L2116.58,337.01 L2116.88,337.16 L2117.25,337.30 L2117.76,337.41 L2118.24,337.55 L2118.68,337.71 L2119.08,337.90 L2119.42,338.10 L2119.69,338.33 L2119.80,338.60 L2119.84,338.87 L2119.88,339.15 L2119.91,339.43 L2119.94,339.71 L2119.96,339.98 L2119.98,340.26 L2119.99,340.54 L2120.00,340.82 Z M2098.10,341.10 a5.90,5.90 0 1,0 11.80,0 a5.90,5.90 0 1,0 -11.80,0 Z"/></svg>
<svg style="left:2075px;top:315px" width="125" height="55" viewBox="0 0 2534 1115">
<g stroke="#233348" stroke-width="70" fill="none" stroke-linecap="round">
<path d="M1685,350 A270,270 0 0 1 2150,500"/>
<path d="M2085,705 A270,270 0 0 1 1618,545"/></g>
<g fill="#233348"><path d="M2045,515 L2250,515 L2148,645 Z"/><path d="M1520,560 L1720,560 L1618,425 Z"/></g>
</svg>
<div class="a" style="left:2222px;top:311px;width:246px;height:60px;background:#346ed6;border-radius:12px"></div>
<div class="t" style="left:2255px;top:327.5px;font-size:26px;color:#fff;font-weight:400;">创建身份提供商</div>
<div class="t" style="left:496.5px;top:412.5px;font-size:26px;color:#9a9a9a;font-weight:400;-webkit-text-stroke:0.35px #9a9a9a;">提供商名称</div>
<div class="t" style="left:1442.5px;top:412.5px;font-size:26px;color:#9a9a9a;font-weight:400;-webkit-text-stroke:0.35px #9a9a9a;">状态</div>
<div class="a" style="left:472px;top:545px;width:2020px;height:2px;background:#e9eaed"></div>
<div class="t" style="left:496.5px;top:487.5px;font-size:26px;color:#333333;font-weight:400;letter-spacing:0.6px;">azure</div>
<div class="a" style="left:1444px;top:488px;width:20px;height:20px;border-radius:50%;background:#62c072"></div>
<div class="t" style="left:1482px;top:486px;font-size:26px;color:#333333;font-weight:400;">启用</div>
<div class="a" style="left:2415px;top:489px;width:6px;height:6px;border-radius:50%;background:#233348"></div>
<div class="a" style="left:2415px;top:500px;width:6px;height:6px;border-radius:50%;background:#233348"></div>
<div class="a" style="left:2415px;top:511px;width:6px;height:6px;border-radius:50%;background:#233348"></div>
<div class="a" style="left:472px;top:635px;width:2020px;height:2px;background:#e9eaed"></div>
<div class="t" style="left:496.5px;top:577.5px;font-size:26px;color:#333333;font-weight:400;letter-spacing:0.6px;">10-6-8-1</div>
<div class="a" style="left:1444px;top:578px;width:20px;height:20px;border-radius:50%;background:#62c072"></div>
<div class="t" style="left:1482px;top:576px;font-size:26px;color:#333333;font-weight:400;">启用</div>
<div class="a" style="left:2415px;top:579px;width:6px;height:6px;border-radius:50%;background:#233348"></div>
<div class="a" style="left:2415px;top:590px;width:6px;height:6px;border-radius:50%;background:#233348"></div>
<div class="a" style="left:2415px;top:601px;width:6px;height:6px;border-radius:50%;background:#233348"></div>
<div class="a" style="left:472px;top:725px;width:2020px;height:2px;background:#e9eaed"></div>
<div class="t" style="left:496.5px;top:667.5px;font-size:26px;color:#333333;font-weight:400;letter-spacing:0.6px;">sadsaasd</div>
<div class="a" style="left:1444px;top:668px;width:20px;height:20px;border-radius:50%;background:#62c072"></div>
<div class="t" style="left:1482px;top:666px;font-size:26px;color:#333333;font-weight:400;">启用</div>
<div class="a" style="left:2415px;top:669px;width:6px;height:6px;border-radius:50%;background:#233348"></div>
<div class="a" style="left:2415px;top:680px;width:6px;height:6px;border-radius:50%;background:#233348"></div>
<div class="a" style="left:2415px;top:691px;width:6px;height:6px;border-radius:50%;background:#233348"></div>
<div class="a" style="left:472px;top:815px;width:2020px;height:2px;background:#e9eaed"></div>
<div class="t" style="left:496.5px;top:757.5px;font-size:26px;color:#333333;font-weight:400;letter-spacing:0.6px;">demo-alpha</div>
<div class="a" style="left:1444px;top:758px;width:20px;height:20px;border-radius:50%;background:#62c072"></div>
<div class="t" style="left:1482px;top:756px;font-size:26px;color:#333333;font-weight:400;">启用</div>
<div class="a" style="left:2415px;top:759px;width:6px;height:6px;border-radius:50%;background:#233348"></div>
<div class="a" style="left:2415px;top:770px;width:6px;height:6px;border-radius:50%;background:#233348"></div>
<div class="a" style="left:2415px;top:781px;width:6px;height:6px;border-radius:50%;background:#233348"></div>
<div class="a" style="left:472px;top:905px;width:2020px;height:2px;background:#e9eaed"></div>
<div class="t" style="left:496.5px;top:847.5px;font-size:26px;color:#333333;font-weight:400;letter-spacing:0.6px;">测试</div>
<div class="a" style="left:1444px;top:848px;width:20px;height:20px;border-radius:50%;background:#62c072"></div>
<div class="t" style="left:1482px;top:846px;font-size:26px;color:#333333;font-weight:400;">启用</div>
<div class="a" style="left:2415px;top:849px;width:6px;height:6px;border-radius:50%;background:#233348"></div>
<div class="a" style="left:2415px;top:860px;width:6px;height:6px;border-radius:50%;background:#233348"></div>
<div class="a" style="left:2415px;top:871px;width:6px;height:6px;border-radius:50%;background:#233348"></div>
<div class="a" style="left:472px;top:995px;width:2020px;height:2px;background:#e9eaed"></div>
<div class="t" style="left:496.5px;top:937.5px;font-size:26px;color:#333333;font-weight:400;letter-spacing:0.6px;">hyt-kangaroo-test</div>
<div class="a" style="left:1444px;top:938px;width:20px;height:20px;border-radius:50%;background:#62c072"></div>
<div class="t" style="left:1482px;top:936px;font-size:26px;color:#333333;font-weight:400;">启用</div>
<div class="a" style="left:2415px;top:939px;width:6px;height:6px;border-radius:50%;background:#233348"></div>
<div class="a" style="left:2415px;top:950px;width:6px;height:6px;border-radius:50%;background:#233348"></div>
<div class="a" style="left:2415px;top:961px;width:6px;height:6px;border-radius:50%;background:#233348"></div>
<div class="a" style="left:472px;top:1085px;width:2020px;height:2px;background:#e9eaed"></div>
<div class="t" style="left:496.5px;top:1027.5px;font-size:26px;color:#333333;font-weight:400;letter-spacing:0.6px;">test-oidc01</div>
<div class="a" style="left:1444px;top:1028px;width:20px;height:20px;border-radius:50%;background:#62c072"></div>
<div class="t" style="left:1482px;top:1026px;font-size:26px;color:#333333;font-weight:400;">启用</div>
<div class="a" style="left:2415px;top:1029px;width:6px;height:6px;border-radius:50%;background:#233348"></div>
<div class="a" style="left:2415px;top:1040px;width:6px;height:6px;border-radius:50%;background:#233348"></div>
<div class="a" style="left:2415px;top:1051px;width:6px;height:6px;border-radius:50%;background:#233348"></div>
<div class="a" style="left:472px;top:1175px;width:2020px;height:2px;background:#e9eaed"></div>
<div class="t" style="left:496.5px;top:1117.5px;font-size:26px;color:#333333;font-weight:400;letter-spacing:0.6px;">test-oidc-04</div>
<div class="a" style="left:1444px;top:1118px;width:20px;height:20px;border-radius:50%;background:#62c072"></div>
<div class="t" style="left:1482px;top:1116px;font-size:26px;color:#333333;font-weight:400;">启用</div>
<div class="a" style="left:2415px;top:1119px;width:6px;height:6px;border-radius:50%;background:#233348"></div>
<div class="a" style="left:2415px;top:1130px;width:6px;height:6px;border-radius:50%;background:#233348"></div>
<div class="a" style="left:2415px;top:1141px;width:6px;height:6px;border-radius:50%;background:#233348"></div>
<div class="a" style="left:472px;top:1265px;width:2020px;height:2px;background:#e9eaed"></div>
<div class="t" style="left:496.5px;top:1207.5px;font-size:26px;color:#333333;font-weight:400;letter-spacing:0.6px;">demo-test1</div>
<div class="a" style="left:1444px;top:1208px;width:20px;height:20px;border-radius:50%;background:#d9534f"></div>
<div class="t" style="left:1482px;top:1206px;font-size:26px;color:#333333;font-weight:400;">未启用</div>
<div class="a" style="left:2415px;top:1209px;width:6px;height:6px;border-radius:50%;background:#233348"></div>
<div class="a" style="left:2415px;top:1220px;width:6px;height:6px;border-radius:50%;background:#233348"></div>
<div class="a" style="left:2415px;top:1231px;width:6px;height:6px;border-radius:50%;background:#233348"></div>
</body></html>
